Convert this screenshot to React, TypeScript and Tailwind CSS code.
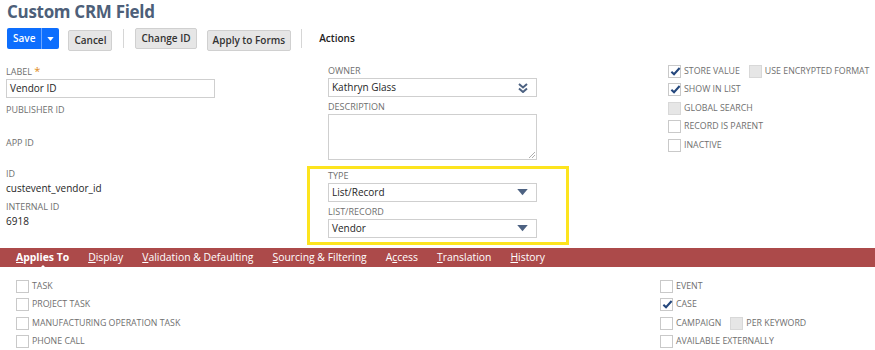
import { ReactNode } from "react";

const labelCls = "text-[9px] leading-[14px] text-[#6f6f6f] uppercase whitespace-nowrap";

const Box = ({ checked, disabled }: { checked?: boolean; disabled?: boolean }) => (
    <span
        className={
            "relative inline-block w-[13px] h-[13px] border shrink-0 " +
            (disabled ? "bg-[#e6e6e6] border-[#d8d8d8]" : "bg-white border-[#c9c9c9]")
        }
    >
        {checked && (
            <svg viewBox="0 0 12 12" className="absolute left-[1px] top-[0px] w-[11px] h-[11px]">
                <path d="M1.5 6.2 L4.4 9 L10.5 2.2" fill="none" stroke="#24477d" strokeWidth="2.2" />
            </svg>
        )}
    </span>
);

const Check = ({ label, checked, disabled, children }: { label: string; checked?: boolean; disabled?: boolean; children?: ReactNode }) => (
    <div className="flex items-center h-[18.5px] whitespace-nowrap">
        <Box checked={checked} disabled={disabled} />
        <span className="ml-[3px] text-[8.8px] text-[#6f6f6f] uppercase">{label}</span>
        {children}
    </div>
);

const Caret = () => (
    <svg viewBox="0 0 12 8" className="w-[11px] h-[7px]">
        <path d="M0 0 H12 L6 7 Z" fill="#4d6282" />
    </svg>
);

const Select = ({ value, icon }: { value: string; icon?: ReactNode }) => (
    <div className="flex items-center justify-between w-[209px] h-[19px] border border-[#cfcfcf] bg-white pl-[3px] pr-[8px] text-[10px] text-[#262626]">
        <span>{value}</span>
        {icon ?? <Caret />}
    </div>
);

const Button = ({ children }: { children: ReactNode }) => (
    <button className="h-[21px] px-[5px] rounded-[2px] bg-[#e6e6e6] border border-[#d0d0d0] text-[10px] font-semibold text-[#333]">
        {children}
    </button>
);

const tabs = [
    { first: "A", rest: "pplies To", active: true },
    { first: "D", rest: "isplay" },
    { first: "V", rest: "alidation & Defaulting" },
    { first: "S", rest: "ourcing & Filtering" },
    { first: "A", rest: "ccess", underlineIdx: 1 },
    { first: "T", rest: "ranslation" },
    { first: "H", rest: "istory" },
];

export default function App() {
    return (
        <div className="w-[875px] h-[350px] bg-white overflow-hidden font-['Open_Sans',sans-serif]">
            <h1 className="pl-[7px] h-[27px] text-[17px] leading-[22px] pt-[1px] font-bold tracking-[-0.3px] text-[#4d5f79]">Custom CRM Field</h1>

            <div className="flex items-center pl-[7px] h-[21px] mt-[1px]">
                <div className="flex h-[21px] rounded-[2px] bg-[#0d6efd] text-white text-[10px] font-semibold">
                    <span className="flex items-center px-[6px] border-r border-[#6aa5ff]">Save</span>
                    <span className="flex items-center justify-center w-[17px]">
                        <svg viewBox="0 0 8 5" className="w-[7px] h-[4px]"><path d="M0 0 H8 L4 5 Z" fill="white" /></svg>
                    </span>
                </div>
                <div className="ml-[9px]"><Button>Cancel</Button></div>
                <div className="mx-[11px] w-px h-[19px] bg-[#d6d6d6]" />
                <Button>Change ID</Button>
                <div className="ml-[10px]"><Button>Apply to Forms</Button></div>
                <div className="mx-[10px] w-px h-[19px] bg-[#d6d6d6]" />
                <span className="ml-[7px] text-[10px] font-semibold text-[#222]">Actions</span>
            </div>

            <div className="flex mt-[15px]">
                {/* left column */}
                <div className="w-[328px] shrink-0 pl-[6px]">
                    <div className={labelCls}>
                        Label <span className="text-[#e08a17] text-[11px]">*</span>
                    </div>
                    <div className="w-[209px] h-[19px] border border-[#cfcfcf] pl-[3px] text-[10px] leading-[17px] text-[#262626]">Vendor ID</div>
                    <div className={labelCls + " mt-[5px]"}>Publisher ID</div>
                    <div className="h-[19px]" />
                    <div className={labelCls}>App ID</div>
                    <div className="h-[17px]" />
                    <div className={labelCls}>ID</div>
                    <div className="text-[10px] leading-[14px] text-[#262626]">custevent_vendor_id</div>
                    <div className={labelCls + " mt-[5px]"}>Internal ID</div>
                    <div className="text-[10px] leading-[14px] text-[#262626]">6918</div>
                </div>

                {/* middle column */}
                <div className="w-[340px] shrink-0">
                    <div className={labelCls}>Owner</div>
                    <Select
                        value="Kathryn Glass"
                        icon={
                            <svg viewBox="0 0 10 10" className="w-[10px] h-[10px]">
                                <path d="M1 1 L5 4.5 L9 1 M1 5.5 L5 9 L9 5.5" fill="none" stroke="#4d6282" strokeWidth="2" />
                            </svg>
                        }
                    />
                    <div className={labelCls + " mt-[3px]"}>Description</div>
                    <div className="relative w-[209px] h-[46px] border border-[#cfcfcf]">
                        <svg viewBox="0 0 6 6" className="absolute right-[1px] bottom-[1px] w-[6px] h-[6px]">
                            <path d="M0 6 L6 0 M3 6 L6 3" stroke="#9a9a9a" strokeWidth="0.8" />
                        </svg>
                    </div>
                    <div className="ml-[-21px] mt-[6px] w-[262px] border-[3px] border-[#fde41e] pl-[18px] pb-[4px]">
                        <div className={labelCls}>Type</div>
                        <Select value="List/Record" />
                        <div className={labelCls + " mt-[3px]"}>List/Record</div>
                        <Select value="Vendor" />
                    </div>
                </div>

                {/* right column */}
                <div className="mt-[-2px]">
                    <Check label="Store Value" checked>
                        <span className="ml-[9px] flex"><Box disabled /></span>
                        <span className="ml-[3px] text-[8.8px] text-[#6f6f6f] uppercase">Use Encrypted Format</span>
                    </Check>
                    <Check label="Show in List" checked />
                    <Check label="Global Search" disabled />
                    <Check label="Record is Parent" />
                    <Check label="Inactive" />
                </div>
            </div>

            <div className="flex items-center h-[19px] mt-[3px] bg-[#ac4a4a] pl-[16px] gap-[19px] text-[10.4px] text-white">
                {tabs.map((t, i) => (
                    <span key={i} className={"relative " + (t.active ? "font-bold" : "")}>
                        {t.underlineIdx ? (
                            <>
                                {t.first}
                                <span className="underline">{t.rest[0]}</span>
                                {t.rest.slice(1)}
                            </>
                        ) : (
                            <>
                                <span className="underline">{t.first}</span>
                                {t.rest}
                            </>
                        )}
                        {t.active && (
                            <span className="absolute left-1/2 -translate-x-1/2 bottom-[-4px] w-0 h-0 border-l-[4px] border-r-[4px] border-b-[4px] border-l-transparent border-r-transparent border-b-white" />
                        )}
                    </span>
                ))}
            </div>

            <div className="flex mt-[10px]">
                <div className="w-[660px] shrink-0 pl-[16px]">
                    <Check label="Task" />
                    <Check label="Project Task" />
                    <Check label="Manufacturing Operation Task" />
                    <Check label="Phone Call" />
                </div>
                <div>
                    <Check label="Event" />
                    <Check label="Case" checked />
                    <Check label="Campaign">
                        <span className="ml-[9px] flex"><Box disabled /></span>
                        <span className="ml-[3px] text-[8.8px] text-[#6f6f6f] uppercase">Per Keyword</span>
                    </Check>
                    <Check label="Available Externally" />
                </div>
            </div>
        </div>
    );
}
